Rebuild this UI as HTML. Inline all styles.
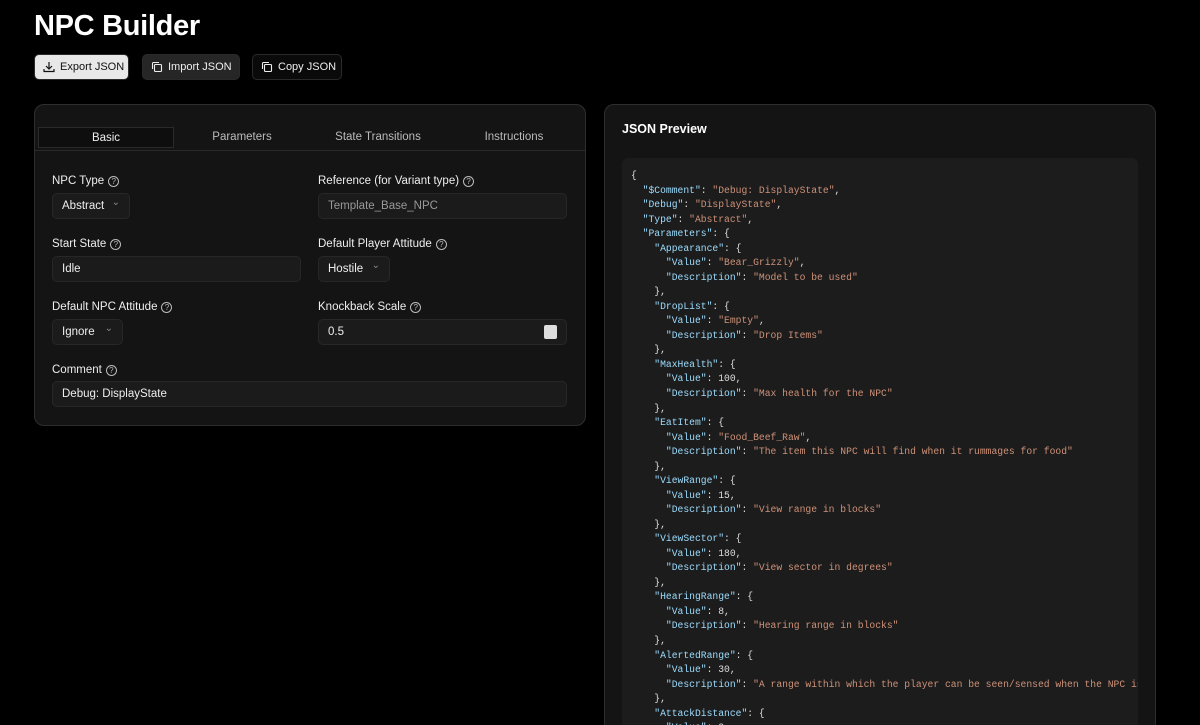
<!DOCTYPE html>
<html><head><meta charset="utf-8"><style>
*{box-sizing:border-box;margin:0;padding:0}
html,body{width:1200px;height:725px;overflow:hidden}
body{background:#000;color:#eee;font-family:"Liberation Sans","DejaVu Sans",sans-serif;position:relative}
h1{position:absolute;left:34px;top:10px;font-size:29px;font-weight:bold;color:#fff;letter-spacing:-0.3px}
.btn{position:absolute;top:54px;height:26px;border-radius:5px;font-size:11px;display:flex;align-items:center;gap:5px;padding:0 8px;border:1px solid #2a2a2a;white-space:nowrap}
.btn svg{flex-shrink:0;width:12px;height:12px}
.b1{left:34px;width:95px;background:#e8e8e8;color:#111}
.b2{left:142px;width:98px;background:#262626;color:#eee}
.b3{left:252px;width:90px;background:#0a0a0a;color:#eee}
.card{position:absolute;background:#141414;border:1px solid #2e2e2e;border-radius:10px}
.left{left:34px;top:104px;width:552px;height:322px}
.right{left:604px;top:104px;width:552px;height:640px;overflow:hidden}
.tabs{position:absolute;left:0;top:22px;width:550px;height:24px;border-bottom:1px solid #2a2a2a}
.tab{position:absolute;top:0;height:21px;font-size:11.5px;color:#bbb;text-align:center;line-height:21px;width:136px}
.tab.on{background:#0e0e0e;border:1px solid #2a2a2a;color:#eee;left:3px}
.lbl{position:absolute;font-size:11.5px;color:#eee;display:flex;align-items:center;gap:4px}
.q{width:11px;height:11px;border:1px solid #bbb;border-radius:50%;font-size:8px;line-height:9px;text-align:center;color:#bbb}
.in{position:absolute;height:26px;background:#1b1b1b;border:1px solid #272727;border-radius:5px;font-size:11.5px;color:#eee;padding-left:9px;line-height:24px}
.sel::after{content:"⌄";position:absolute;right:9px;top:-3px;color:#888;font-size:10px}
.pv{position:absolute;left:17px;top:17px;font-weight:bold;font-size:12.5px;color:#fff}
pre{position:absolute;left:17px;top:53px;width:516px;height:600px;background:#1c1c1c;border-radius:6px;padding:11px 9px;font-family:"Liberation Mono",monospace;font-size:9.7px;line-height:14.53px;color:#ddd;overflow:hidden;white-space:pre}
.k{color:#9cdcfe}.s{color:#ce9178}
</style></head><body>
<h1>NPC Builder</h1>
<div class="btn b1"><svg viewBox="0 0 12 12" fill="none" stroke="#111" stroke-width="1.2"><path d="M6 1v7M3 5l3 3 3-3M1 8v2.5h10V8"/></svg>Export JSON</div>
<div class="btn b2"><svg viewBox="0 0 12 12" fill="none" stroke="#eee" stroke-width="1.1"><rect x="3.5" y="3.5" width="7" height="7" rx="1"/><path d="M1.5 8V2.5a1 1 0 0 1 1-1H8"/></svg>Import JSON</div>
<div class="btn b3"><svg viewBox="0 0 12 12" fill="none" stroke="#eee" stroke-width="1.1"><rect x="3.5" y="3.5" width="7" height="7" rx="1"/><path d="M1.5 8V2.5a1 1 0 0 1 1-1H8"/></svg>Copy JSON</div>
<div class="card left">
<div class="tabs"><div class="tab on">Basic</div><div class="tab" style="left:139px">Parameters</div><div class="tab" style="left:275px">State Transitions</div><div class="tab" style="left:411px">Instructions</div></div>
<div class="lbl" style="left:17px;top:70px">NPC Type <span class="q">?</span></div>
<div class="in sel" style="left:17px;top:88px;width:78px">Abstract</div>
<div class="lbl" style="left:283px;top:70px">Reference (for Variant type) <span class="q">?</span></div>
<div class="in" style="left:283px;top:88px;width:249px;color:#999">Template_Base_NPC</div>
<div class="lbl" style="left:17px;top:133px">Start State <span class="q">?</span></div>
<div class="in" style="left:17px;top:151px;width:249px">Idle</div>
<div class="lbl" style="left:283px;top:133px">Default Player Attitude <span class="q">?</span></div>
<div class="in sel" style="left:283px;top:151px;width:72px">Hostile</div>
<div class="lbl" style="left:17px;top:196px">Default NPC Attitude <span class="q">?</span></div>
<div class="in sel" style="left:17px;top:214px;width:71px">Ignore</div>
<div class="lbl" style="left:283px;top:196px">Knockback Scale <span class="q">?</span></div>
<div class="in" style="left:283px;top:214px;width:249px">0.5<span style="position:absolute;right:9px;top:5px;width:13px;height:14px;background:#ddd;border-radius:2px"></span></div>
<div class="lbl" style="left:17px;top:259px">Comment <span class="q">?</span></div>
<div class="in" style="left:17px;top:276px;width:515px">Debug: DisplayState</div>
</div>
<div class="card right">
<div class="pv">JSON Preview</div>
<pre>{
  <span class="k">"$Comment"</span>: <span class="s">"Debug: DisplayState"</span>,
  <span class="k">"Debug"</span>: <span class="s">"DisplayState"</span>,
  <span class="k">"Type"</span>: <span class="s">"Abstract"</span>,
  <span class="k">"Parameters"</span>: {
    <span class="k">"Appearance"</span>: {
      <span class="k">"Value"</span>: <span class="s">"Bear_Grizzly"</span>,
      <span class="k">"Description"</span>: <span class="s">"Model to be used"</span>
    },
    <span class="k">"DropList"</span>: {
      <span class="k">"Value"</span>: <span class="s">"Empty"</span>,
      <span class="k">"Description"</span>: <span class="s">"Drop Items"</span>
    },
    <span class="k">"MaxHealth"</span>: {
      <span class="k">"Value"</span>: 100,
      <span class="k">"Description"</span>: <span class="s">"Max health for the NPC"</span>
    },
    <span class="k">"EatItem"</span>: {
      <span class="k">"Value"</span>: <span class="s">"Food_Beef_Raw"</span>,
      <span class="k">"Description"</span>: <span class="s">"The item this NPC will find when it rummages for food"</span>
    },
    <span class="k">"ViewRange"</span>: {
      <span class="k">"Value"</span>: 15,
      <span class="k">"Description"</span>: <span class="s">"View range in blocks"</span>
    },
    <span class="k">"ViewSector"</span>: {
      <span class="k">"Value"</span>: 180,
      <span class="k">"Description"</span>: <span class="s">"View sector in degrees"</span>
    },
    <span class="k">"HearingRange"</span>: {
      <span class="k">"Value"</span>: 8,
      <span class="k">"Description"</span>: <span class="s">"Hearing range in blocks"</span>
    },
    <span class="k">"AlertedRange"</span>: {
      <span class="k">"Value"</span>: 30,
      <span class="k">"Description"</span>: <span class="s">"A range within which the player can be seen/sensed when the NPC is alerted"</span>
    },
    <span class="k">"AttackDistance"</span>: {
      <span class="k">"Value"</span>: 2,
</pre>
</div>
</body></html>
